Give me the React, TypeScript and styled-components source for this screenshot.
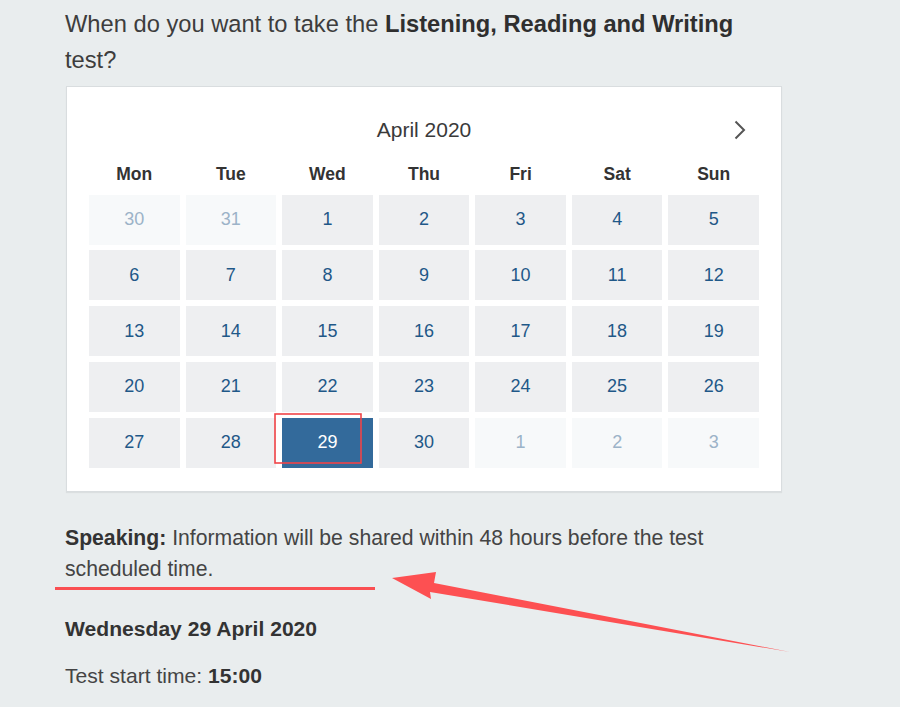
import styled, { createGlobalStyle } from "styled-components";

const GlobalStyle = createGlobalStyle`
  html, body {
    margin: 0;
    padding: 0;
    background: #e9edee;
  }
  body {
    font-family: "Liberation Sans", Arial, sans-serif;
  }
`;

const Page = styled.div`
  position: relative;
  width: 900px;
  min-height: 707px;
  overflow: hidden;
  background: #e9edee;
`;
const Content = styled.div`
  width: 717px;
  padding: 5.5px 0 0 65px;
  color: #444;
`;
const Question = styled.h2`
  margin: 0 0 8px;
  font-size: 23.7px;
  line-height: 36px;
  font-weight: 400;
  color: #3d3d3d;

  b {
    color: #2f2f2f;
    font-weight: 700;
  }
`;
const Card = styled.div`
  margin-left: 1px;
  background: #fff;
  border: 1px solid #d9dddf;
  box-shadow: 0 1px 1px rgba(0, 0, 0, 0.06);
  padding: 21px 22px 23px;
`;
const MonthRow = styled.div`
  position: relative;
  height: 44px;
  line-height: 44px;
  text-align: center;
  font-size: 21px;
  color: #3a3a3a;
  margin-bottom: 7px;
`;
const NextButton = styled.button`
  position: absolute;
  right: 12px;
  top: 11px;
  width: 14px;
  height: 22px;
  padding: 0;
  border: none;
  background: none;
  color: #555;
  cursor: pointer;
  display: flex;
  align-items: center;
  justify-content: center;
`;
const Grid = styled.div`
  display: grid;
  grid-template-columns: repeat(7, 1fr);
  column-gap: 6px;
`;
const Weekdays = styled(Grid)`
  height: 30px;
  margin-bottom: 6px;
`;
const Weekday = styled.div`
  text-align: center;
  line-height: 30px;
  font-size: 17.5px;
  font-weight: 700;
  color: #333;
`;
const Days = styled(Grid)`
  grid-auto-rows: 50px;
  row-gap: 5.75px;
`;
const Day = styled.div<{ $muted?: boolean; $selected?: boolean }>`
  display: flex;
  align-items: center;
  justify-content: center;
  font-size: 18px;
  background: ${(p) => (p.$selected ? "#336a9b" : p.$muted ? "#f7f9fa" : "#eeeff1")};
  color: ${(p) => (p.$selected ? "#ffffff" : p.$muted ? "#9cb3c8" : "#1f5888")};
`;
const Paragraph = styled.p`
  margin: 30px 0 0;
  font-size: 21.2px;
  line-height: 31px;
  color: #444;

  b {
    color: #333;
  }
`;
const DateTitle = styled.p`
  margin: 29px 0 0;
  font-size: 21.1px;
  line-height: 31px;
  font-weight: 700;
  color: #333;
`;
const TimeLine = styled.p`
  margin: 16px 0 0;
  font-size: 21.1px;
  line-height: 31px;
  color: #444;

  b {
    color: #333;
  }
`;
const Annotations = styled.svg`
  position: absolute;
  left: 0;
  top: 0;
  pointer-events: none;
`;

const weekdays = ["Mon", "Tue", "Wed", "Thu", "Fri", "Sat", "Sun"];

type Cell = { n: number; muted?: boolean };
const cells: Cell[] = [
  { n: 30, muted: true },
  { n: 31, muted: true },
  ...Array.from({ length: 30 }, (_, i) => ({ n: i + 1 })),
  { n: 1, muted: true },
  { n: 2, muted: true },
  { n: 3, muted: true },
];

export default function App() {
  const selected = 29;
  return (
    <Page>
      <GlobalStyle />
      <Content>
        <Question>
          When do you want to take the <b>Listening, Reading and Writing</b> test?
        </Question>
        <Card>
          <MonthRow>
            April 2020
            <NextButton aria-label="Next month">
              <svg width="12" height="20" viewBox="0 0 12 20" fill="none">
                <path d="M1.5 1.5 L10 10 L1.5 18.5" stroke="currentColor" strokeWidth="2" />
              </svg>
            </NextButton>
          </MonthRow>
          <Weekdays>
            {weekdays.map((d) => (
              <Weekday key={d}>{d}</Weekday>
            ))}
          </Weekdays>
          <Days>
            {cells.map((c, i) => (
              <Day key={i} $muted={c.muted} $selected={!c.muted && c.n === selected}>
                {c.n}
              </Day>
            ))}
          </Days>
        </Card>
        <Paragraph>
          <b>Speaking:</b> Information will be shared within 48 hours before the test scheduled time.
        </Paragraph>
        <DateTitle>Wednesday 29 April 2020</DateTitle>
        <TimeLine>
          Test start time: <b>15:00</b>
        </TimeLine>
      </Content>
      <Annotations width="900" height="707" viewBox="0 0 900 707">
        <rect x="275" y="414" width="86" height="49" fill="none" stroke="#f04448" strokeWidth="1.6" />
        <rect x="55" y="587" width="320" height="3" fill="#fa4f52" />
        <polygon
          points="392,578 436,572 434,583 790,652 430,592 431,599"
          fill="#fd5052"
        />
      </Annotations>
    </Page>
  );
}
